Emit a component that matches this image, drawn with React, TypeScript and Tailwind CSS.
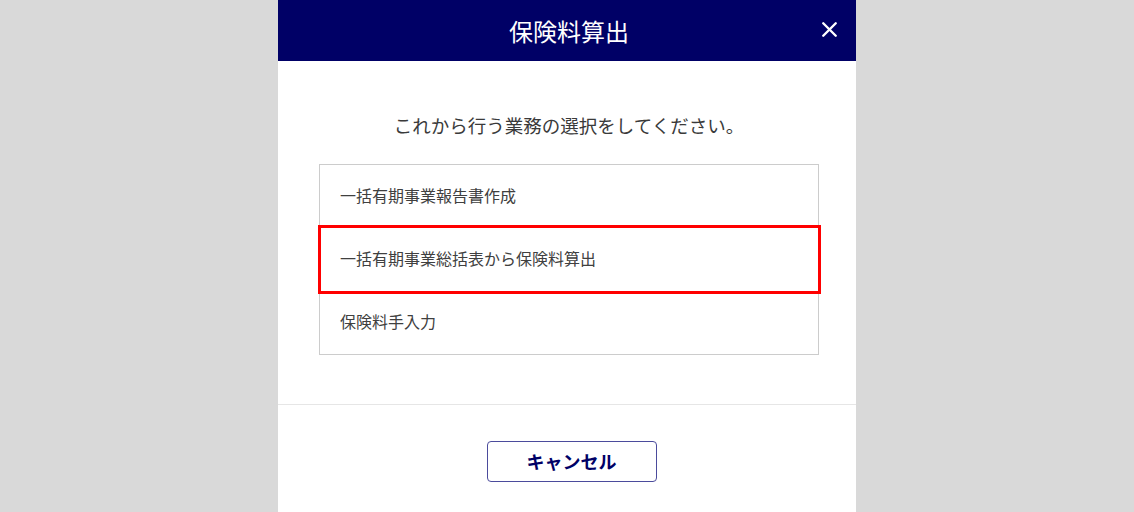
import { X } from "lucide-react";

const OPTIONS = [
  { label: "一括有期事業報告書作成", marked: false },
  { label: "一括有期事業総括表から保険料算出", marked: true },
  { label: "保険料手入力", marked: false },
];

export default function App() {
  return (
    <div
      className="flex h-[512px] w-full justify-center overflow-hidden bg-[#d9d9d9]"
      style={{ fontFamily: '"Noto Sans CJK JP", "Noto Sans", sans-serif' }}
    >
      <div className="flex w-[578px] flex-col bg-white">
        {/* Header */}
        <div className="relative flex h-[61px] shrink-0 items-center justify-center bg-[#000066] pl-[4px]">
          <span className="text-[24px] font-normal text-white">保険料算出</span>
          <button className="absolute right-[14px] top-[17px] text-white">
            <X className="h-[25px] w-[25px]" strokeWidth={2.3} />
          </button>
        </div>

        {/* Body */}
        <div className="flex flex-col items-center border-b border-[#e6e6e6] pb-[49px] pl-[4px] pt-[48px]">
          <p className="text-[18.5px] leading-[32px] text-[#3a3a3a]">
            これから行う業務の選択をしてください。
          </p>
          <ul className="mt-[23px] w-[500px] border border-[#cccccc]">
            {OPTIONS.map(({ label, marked }) => (
              <li
                key={label}
                className="relative flex h-[63px] items-center px-[20px] pb-[4px] text-[16px] text-[#404040]"
              >
                {label}
                {marked && (
                  <span className="pointer-events-none absolute -left-[2px] -right-[3px] -top-[3px] -bottom-[3px] border-[3px] border-[#ff0000]" />
                )}
              </li>
            ))}
          </ul>
        </div>

        {/* Footer */}
        <div className="flex justify-center pl-[9px] pt-[36px]">
          <button className="h-[41px] w-[170px] rounded-[4px] border-[1.5px] border-[#4b4b9c] text-[18px] font-bold text-[#000066]">
            キャンセル
          </button>
        </div>
      </div>
    </div>
  );
}
